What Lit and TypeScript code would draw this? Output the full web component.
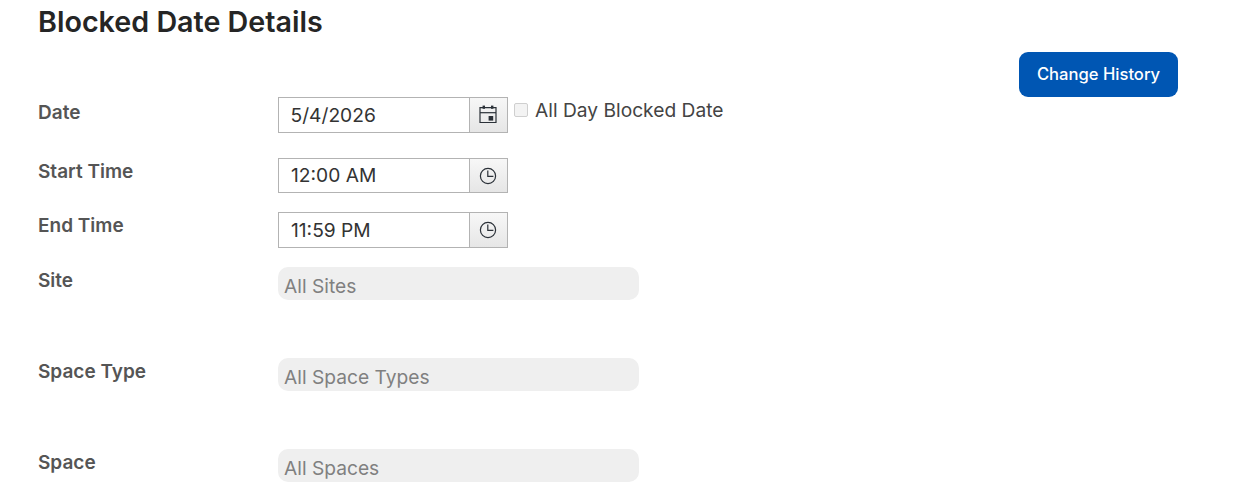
import { LitElement, html, css, svg } from "lit";
import { customElement } from "lit/decorators.js";

const calIcon = svg`<svg class="ic cal" width="18" height="18" viewBox="0 0 18 18" fill="none">
<path d="M1 2.6h16v15H1z" stroke="#2b3138" stroke-width="1.2"/>
<path d="M1 7.7h16" stroke="#2b3138" stroke-width="1.2"/>
<rect x="3.6" y=".6" width="2.4" height="3.2" fill="#2b3138"/><rect x="12" y=".6" width="2.4" height="3.2" fill="#2b3138"/>
<rect x="9.6" y="11" width="4.6" height="4.6" fill="#2b3138"/></svg>`;
const clockIcon = svg`<svg class="ic clock" width="18" height="18" viewBox="0 0 18 18" fill="none">
<circle cx="9" cy="9" r="7.6" stroke="#2b3138" stroke-width="1.2"/>
<path d="M8.8 3.4V9.4h5.6" stroke="#2b3138" stroke-width="1.2"/></svg>`;

@customElement("app-root")
export class AppRoot extends LitElement {
  static styles = css`
    :host { display: block; width: 1252px; height: 499px; overflow: hidden; background: #fff; font-family: Inter, "Noto Sans", sans-serif; }
    .page { padding: 4px 74px 0 38px; }
    h1 { margin: 0; font-size: 28.7px; line-height: 36px; font-weight: 600; color: #252525; letter-spacing: 0; }
    .actions { display: flex; justify-content: flex-end; margin-top: 12px; height: 45px; }
    .btn { width: 159px; height: 45px; border: 0; border-radius: 9px; background: #0056b3; color: #fff; font: 500 16.6px/45px Inter, sans-serif; padding: 0; }
    .row { display: grid; grid-template-columns: 240px auto 1fr; align-items: start; }
    .r-date { height: 61px; }
    .r-start { height: 54px; }
    .r-end { height: 55px; }
    .r-sel { height: 91px; }
    .lab { font-size: 19px; font-weight: 600; color: #555; line-height: 24px; }
    .r-date .lab { padding-top: 4px; }
    .r-start .lab, .r-end .lab { padding-top: 2px; }
    .r-sel .lab { padding-top: 2px; }
    .picker { display: flex; width: 230px; box-sizing: border-box; border: 1px solid #b3b3b3; background: #fff; }
    .r-date .picker { height: 36px; }
    .r-start .picker { height: 35px; }
    .r-end .picker { height: 36px; }
    .val { flex: 1; padding-left: 12px; font-size: 19.2px; line-height: 33px; color: #333; }
    .r-date .val { line-height: 35px; padding-left: 11.5px; }
    .r-end .val { line-height: 35px; }
    .btn-ic { width: 37px; display: flex; align-items: center; justify-content: center; background: linear-gradient(#f7f7f7, #e6e6e6); border-left: 1px solid #b3b3b3; }
    .cal { margin: -2px 1px 0 0; }
    .clock { margin-right: 1px; }
    .chk { display: flex; align-items: center; margin-left: 6px; height: 26px; color: #444; font-size: 19.2px; }
    .box { width: 14px; height: 14px; box-sizing: border-box; border: 1px solid #cfcfcf; border-radius: 2px; background: #f3f3f3; margin-right: 7px; }
    .sel { width: 361px; height: 33px; border-radius: 10px; background: #efefef; color: #808080; font-size: 19.2px; line-height: 39px; padding-left: 6px; box-sizing: border-box; overflow: hidden; }
  `;

  render() {
    const sel = (l: string, v: string) => html`<div class="row r-sel"><div class="lab">${l}</div><div class="sel">${v}</div></div>`;
    return html`<div class="page">
      <h1>Blocked Date Details</h1>
      <div class="actions"><button class="btn">Change History</button></div>
      <div class="row r-date">
        <div class="lab">Date</div>
        <div class="picker"><div class="val">5/4/2026</div><div class="btn-ic">${calIcon}</div></div>
        <label class="chk"><span class="box"></span>All Day Blocked Date</label>
      </div>
      <div class="row r-start">
        <div class="lab">Start Time</div>
        <div class="picker"><div class="val">12:00 AM</div><div class="btn-ic">${clockIcon}</div></div>
      </div>
      <div class="row r-end">
        <div class="lab">End Time</div>
        <div class="picker"><div class="val">11:59 PM</div><div class="btn-ic">${clockIcon}</div></div>
      </div>
      ${sel("Site", "All Sites")}
      ${sel("Space Type", "All Space Types")}
      ${sel("Space", "All Spaces")}
    </div>`;
  }
}
